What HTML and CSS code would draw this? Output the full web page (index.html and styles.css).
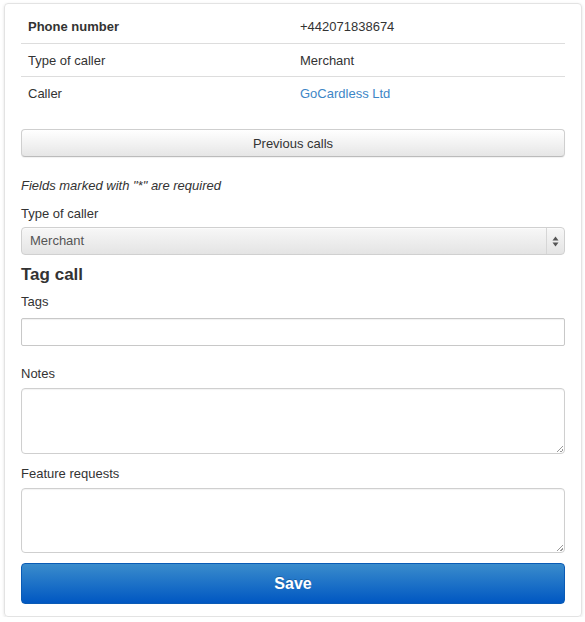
FILE: index.html
```html
<!DOCTYPE html>
<html>
<head>
<meta charset="utf-8">
<link rel="stylesheet" href="styles.css">
</head>
<body>
<div class="card">
  <table class="info">
    <tr><th>Phone number</th><td>+442071838674</td></tr>
    <tr><td>Type of caller</td><td>Merchant</td></tr>
    <tr><td>Caller</td><td><a href="#" class="link">GoCardless Ltd</a></td></tr>
  </table>
  <button class="btn-prev" type="button">Previous calls</button>
  <p class="note">Fields marked with "*" are required</p>
  <label class="lbl lbl-first">Type of caller</label>
  <div class="select">
    <span class="select-text">Merchant</span>
    <span class="select-arrow">
      <svg width="7" height="11" viewBox="0 0 7 11"><path d="M3.5 0.5 L6.5 4.5 L0.5 4.5 Z M3.5 10.5 L6.5 6.5 L0.5 6.5 Z" fill="#555"/></svg>
    </span>
  </div>
  <h3 class="heading">Tag call</h3>
  <label class="lbl lbl-tags">Tags</label>
  <div class="input"></div>
  <label class="lbl lbl-notes">Notes</label>
  <div class="textarea"><span class="grip"></span></div>
  <label class="lbl lbl-feat">Feature requests</label>
  <div class="textarea ta2"><span class="grip"></span></div>
  <button class="btn-save" type="button">Save</button>
</div>
</body>
</html>
```
FILE: styles.css
```css
html, body {
  margin: 0;
  padding: 0;
  background: #fff;
}
body {
  font-family: "Liberation Sans", Arial, Helvetica, sans-serif;
  font-size: 13px;
  line-height: 18px;
  color: #333;
}
.card {
  margin: 3px 3px 0 4px;
  border: 1px solid #e3e3e3;
  border-radius: 4px;
  box-shadow: 0 1px 3px rgba(0,0,0,0.12);
  padding: 6px 16px 12px 16px;
  display: flex;
  flex-direction: column;
}
.info {
  width: 100%;
  border-collapse: collapse;
  table-layout: fixed;
}
.info th, .info td {
  text-align: left;
  padding: 1px 7px 0 7px;
  height: 31px;
  vertical-align: middle;
  border-top: 1px solid #dddddd;
}
.info tr:first-child th, .info tr:first-child td {
  border-top: none;
  padding-top: 0;
  height: 33px;
}
.info th { font-weight: bold; }
.link { color: #3d86c6; text-decoration: none; }
.btn-prev {
  margin-top: 20px;
  height: 28px;
  width: 100%;
  font-family: inherit;
  font-size: 13px;
  color: #333;
  border: 1px solid #cfcfcf;
  border-bottom-color: #bbb;
  border-radius: 4px;
  background: linear-gradient(#ffffff, #e6e6e6);
  box-shadow: inset 0 1px 0 rgba(255,255,255,.3), 0 1px 1px rgba(0,0,0,.06);
  padding: 0;
}
.note {
  margin: 20px 0 0 0;
  font-style: italic;
}
.lbl { display: block; }
.lbl-first { margin-top: 10px; }
.select {
  margin-top: 4px;
  height: 26px;
  border: 1px solid #d0d0d0;
  border-radius: 4px;
  background: linear-gradient(#f7f7f7, #e4e4e4);
  box-shadow: inset 0 1px 1px rgba(255,255,255,.6);
  display: flex;
  align-items: center;
}
.select-text {
  flex: 1;
  padding-left: 8px;
  color: #555;
}
.select-arrow {
  width: 17px;
  height: 26px;
  border-left: 1px solid #d6d6d6;
  display: flex;
  align-items: center;
  justify-content: center;
}
.heading {
  margin: 9px 0 0 0;
  font-size: 17px;
  line-height: 22px;
  font-weight: bold;
  color: #333;
}
.lbl-tags { margin-top: 7px; }
.input {
  margin-top: 7px;
  height: 26px;
  border: 1px solid #c8c8c8;
  border-radius: 2px;
  box-shadow: inset 0 1px 1px rgba(0,0,0,.06);
}
.lbl-notes { margin-top: 19px; }
.textarea {
  margin-top: 5px;
  height: 64px;
  border: 1px solid #cfcfcf;
  border-radius: 4px;
  box-shadow: inset 0 1px 1px rgba(0,0,0,.05);
  position: relative;
}
.ta2 { height: 63px; }
.grip {
  position: absolute;
  right: 1px;
  bottom: 1px;
  width: 6px;
  height: 6px;
  background: linear-gradient(135deg, transparent 45%, #999 45%, #999 55%, transparent 55%, transparent 75%, #999 75%, #999 85%, transparent 85%);
}
.lbl-feat { margin-top: 11px; }
.btn-save {
  margin-top: 10px;
  height: 41px;
  width: 100%;
  font-family: inherit;
  font-size: 16px;
  font-weight: bold;
  color: #fff;
  border: 1px solid #0a5bb5;
  border-radius: 4px;
  background: linear-gradient(#3a8ccc, #0057c2);
  text-shadow: 0 -1px 0 rgba(0,0,0,.2);
  padding: 0;
}
```
